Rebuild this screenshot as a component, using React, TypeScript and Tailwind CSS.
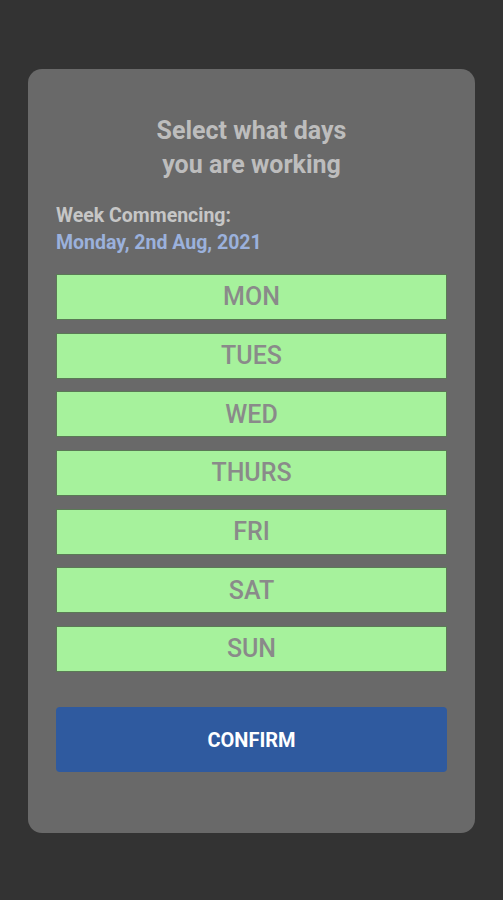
import React from 'react';

const days = ['MON', 'TUES', 'WED', 'THURS', 'FRI', 'SAT', 'SUN'];

export default function App() {
  return (
    <div
      className="min-h-[900px] w-full bg-[#333333] px-[28px] pt-[69px]"
      style={{ fontFamily: 'Roboto, "Noto Sans", sans-serif' }}
    >
      <div className="flex h-[764px] w-[447px] flex-col rounded-[14px] bg-[#696969] px-[28px] pt-[45px]">
        {/* Titre */}
        <h1 className="text-center text-[25px] font-bold leading-[34px] text-[#bdbdbd]">
          Select what days
          <br />
          you are working
        </h1>

        {/* Semaine */}
        <div className="mt-[20px] text-[19.5px] font-bold leading-[27px]">
          <p className="text-[#c6c6c6]">Week Commencing:</p>
          <p className="text-[#9bb1dc]">Monday, 2nd Aug, 2021</p>
        </div>

        {/* Jours */}
        <div className="mt-[18px] flex flex-col gap-[12.7px]">
          {days.map((day) => (
            <button
              key={day}
              className="flex h-[46px] w-full items-center justify-center border border-[#5a7a55] bg-[#a6f29c] text-[25px] font-medium text-[#8a8a8a]"
            >
              {day}
            </button>
          ))}
        </div>

        <button className="mt-[35px] flex h-[65px] w-full items-center justify-center rounded-[4px] bg-[#2f5a9f] text-[20px] font-bold text-white">
          CONFIRM
        </button>
      </div>
    </div>
  );
}
